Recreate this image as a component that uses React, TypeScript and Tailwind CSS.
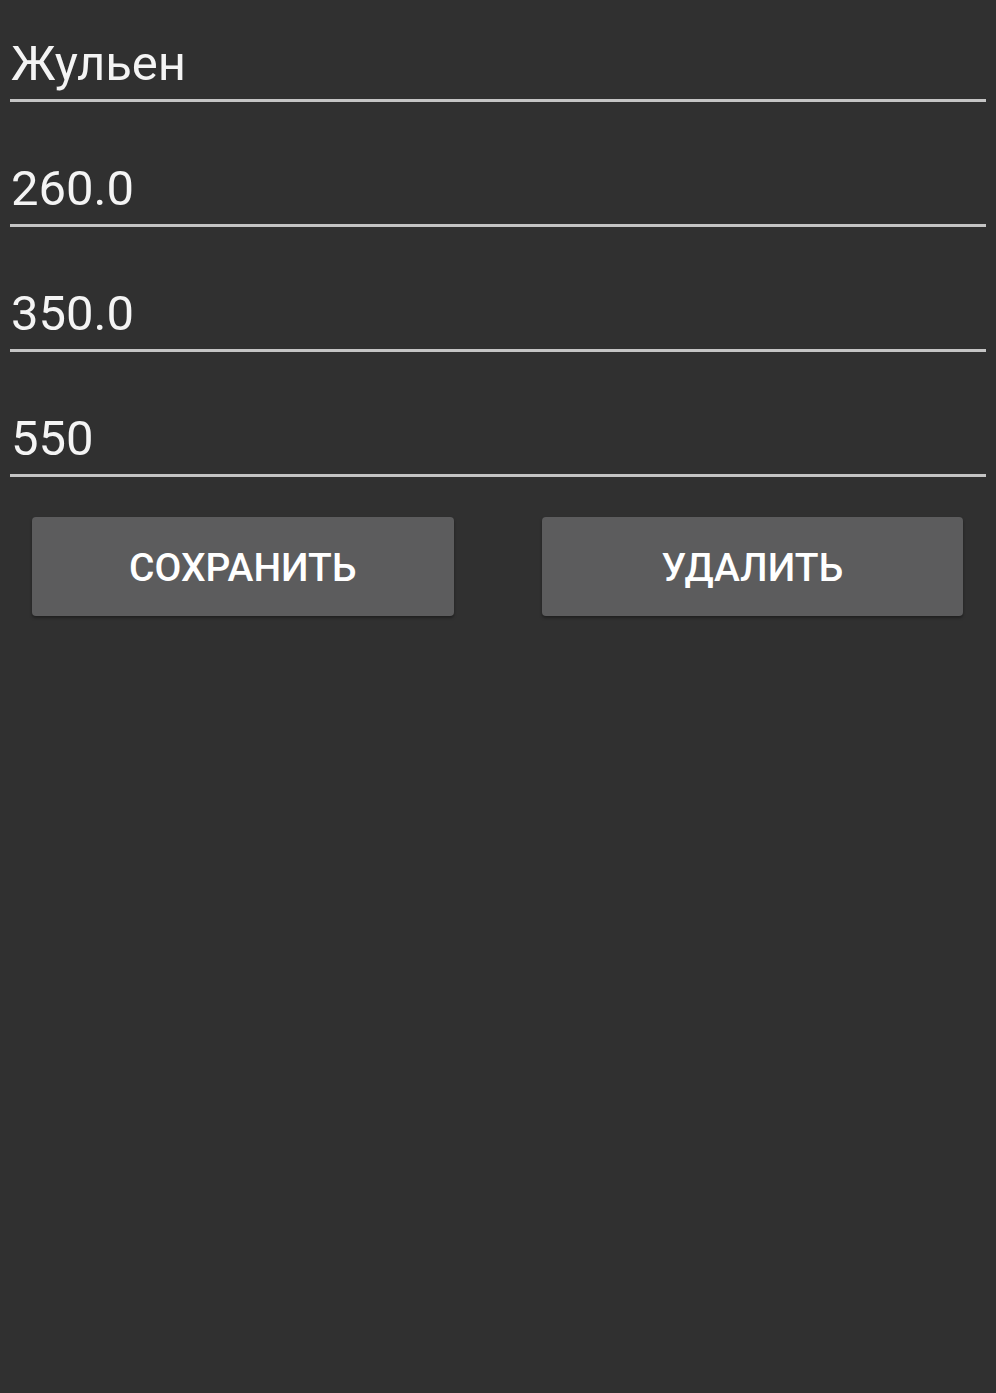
const fields = ['Жульен', '260.0', '350.0', '550'];

export default function App() {
  return (
    <div className="min-h-[1393px] bg-[#303030] font-['Roboto',sans-serif]">
      <div className="flex flex-col gap-[23px] px-[10px]">
        {fields.map((value) => (
          <div
            key={value}
            className="h-[102px] flex items-end border-b-[3px] border-[#c4c4c4] pb-[11px]"
          >
            <span className="text-[49px] leading-none text-[#f4f4f4] pl-[1px]">{value}</span>
          </div>
        ))}
      </div>
      <div className="grid grid-cols-2 gap-[88px] pl-[32px] pr-[33px] mt-[40px]">
        <button className="h-[99px] pt-[4px] rounded-[4px] bg-[#5c5c5d] shadow-[0_2px_3px_rgba(0,0,0,0.35)] text-white text-[39px] font-medium">
          СОХРАНИТЬ
        </button>
        <button className="h-[99px] pt-[4px] rounded-[4px] bg-[#5c5c5d] shadow-[0_2px_3px_rgba(0,0,0,0.35)] text-white text-[39px] font-medium">
          УДАЛИТЬ
        </button>
      </div>
    </div>
  );
}
